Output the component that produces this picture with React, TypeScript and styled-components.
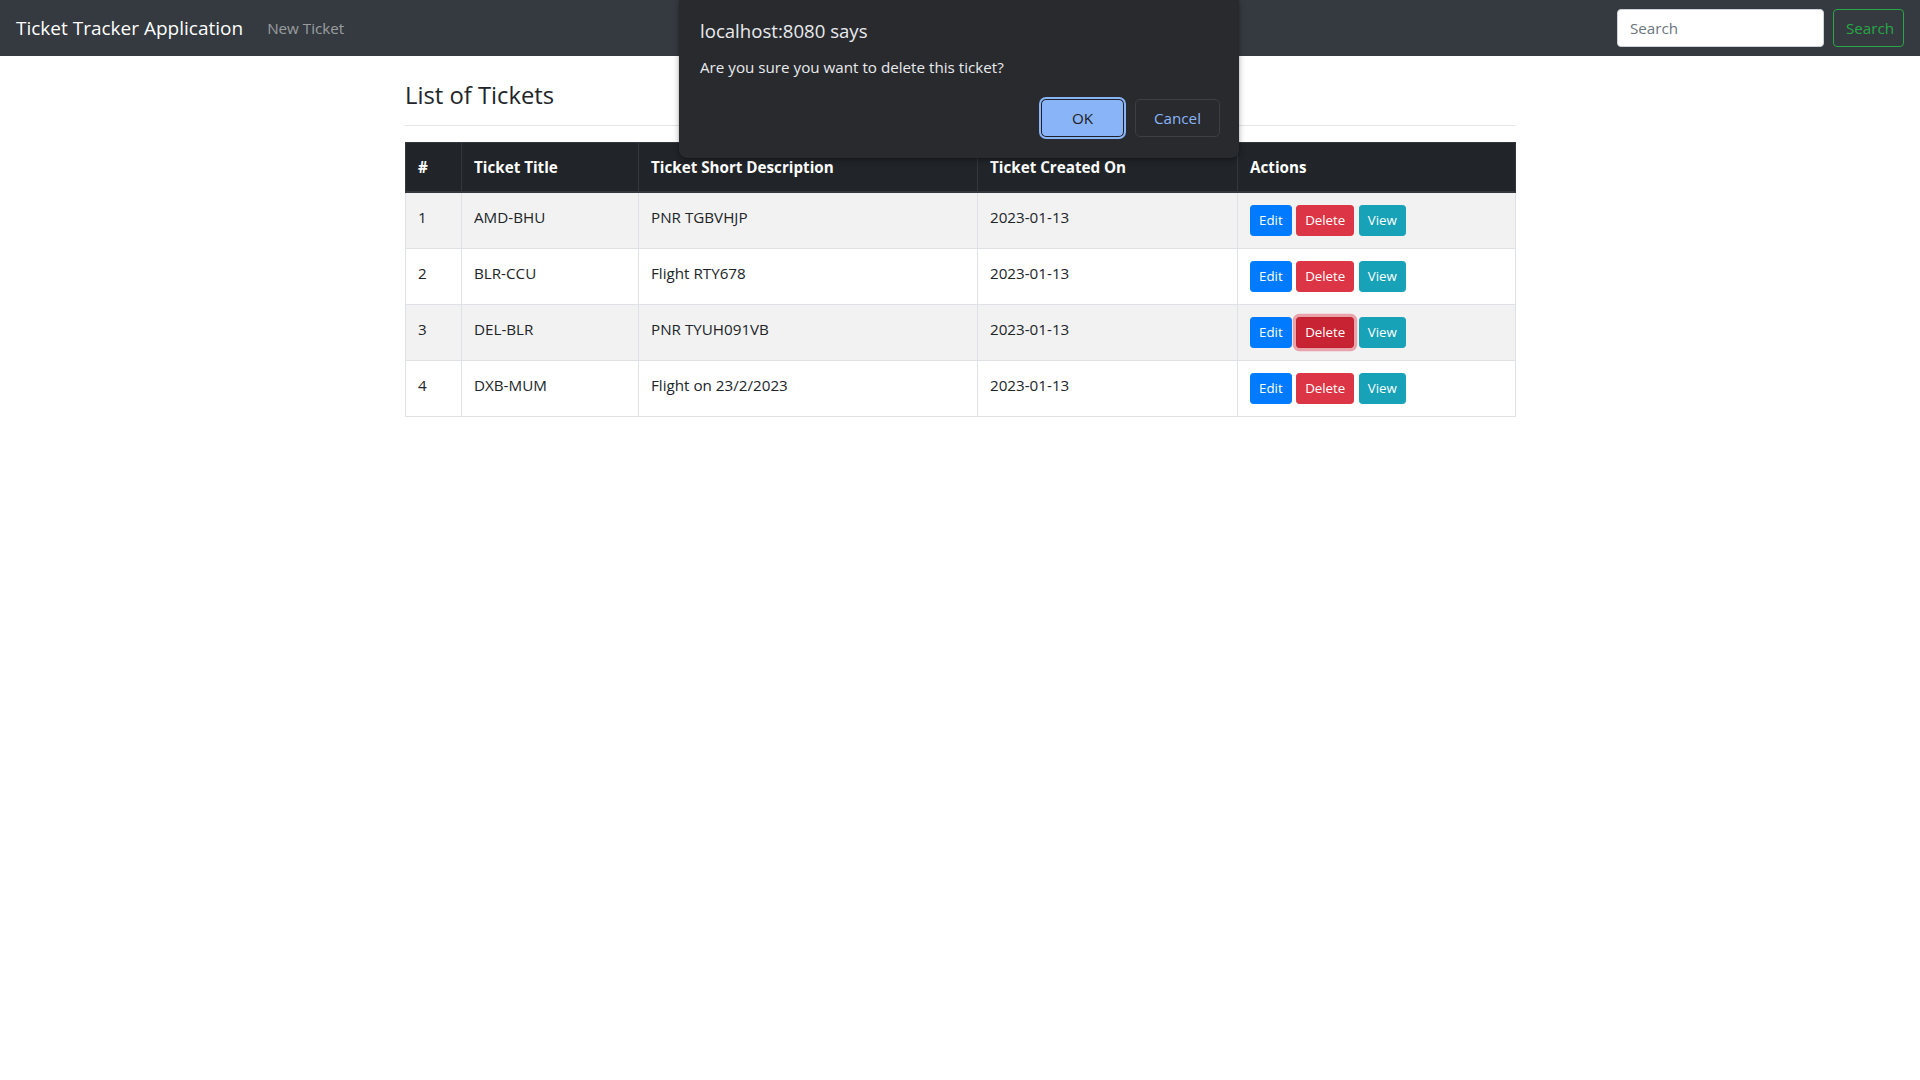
import React from "react";
import styled, { createGlobalStyle, css } from "styled-components";

const GlobalStyle = createGlobalStyle`
  html, body {
    margin: 0;
    padding: 0;
    background: #ffffff;
    font-family: "Open Sans", "Noto Sans", Arial, sans-serif;
    font-size: 15.2px;
    line-height: 1.5;
    color: #212529;
  }
  * { box-sizing: border-box; }
`;

const Page = styled.div`
  position: relative;
  min-height: 1080px;
  width: 100%;
`;

const Navbar = styled.nav`
  display: flex;
  align-items: center;
  height: 56px;
  padding: 8px 16px;
  background: #343a40;
`;

const Brand = styled.a`
  font-size: 19px;
  line-height: 30px;
  padding: 5px 0;
  margin-right: 16px;
  color: #ffffff;
  text-decoration: none;
  white-space: nowrap;
`;

const NavLink = styled.a`
  padding: 8px;
  color: rgba(255, 255, 255, 0.5);
  text-decoration: none;
  font-size: 15.2px;
  line-height: 24px;
`;

const SearchForm = styled.form`
  margin-left: auto;
  display: flex;
  align-items: center;
  gap: 9px;
`;

const SearchInput = styled.input`
  width: 207px;
  height: 38px;
  padding: 6px 12px;
  font-family: inherit;
  font-size: 15.2px;
  color: #495057;
  background: #ffffff;
  border: 1px solid #ced4da;
  border-radius: 4px;
  outline: none;
  &::placeholder { color: #6c757d; }
`;

const OutlineButton = styled.button`
  height: 38px;
  width: 71px;
  padding: 6px 12px;
  font-family: inherit;
  font-size: 15.2px;
  color: #28a745;
  background: transparent;
  border: 1px solid #28a745;
  border-radius: 4px;
`;

const Container = styled.main`
  width: 1140px;
  margin: 0 auto;
  padding: 0 15px;
`;

const Heading = styled.h3`
  margin: 24.5px 0 0;
  font-size: 23.8px;
  font-weight: 500;
  line-height: 29px;
  color: #212529;
`;

const Rule = styled.hr`
  margin: 15.5px 0 16px;
  border: 0;
  border-top: 1px solid rgba(0, 0, 0, 0.1);
`;

const Table = styled.table`
  width: 100%;
  table-layout: fixed;
  border-collapse: collapse;
  border: 1px solid #dee2e6;
`;

const HeadCell = styled.th<{ $w: number }>`
  width: ${(p) => p.$w}px;
  padding: 12px;
  text-align: left;
  vertical-align: bottom;
  font-weight: 700;
  color: #ffffff;
  background: #212529;
  border: 1px solid #32383e;
  border-bottom-width: 2px;
  line-height: 24px;
`;

const Row = styled.tr<{ $striped: boolean }>`
  background: ${(p) => (p.$striped ? "#f2f2f2" : "#ffffff")};
`;

const Cell = styled.td`
  padding: 12px;
  vertical-align: top;
  border: 1px solid #dee2e6;
  line-height: 24px;
  white-space: nowrap;
`;

const Actions = styled.div`
  display: flex;
  gap: 4.5px;
`;

const variants = {
  edit: css`background: #007bff; border-color: #007bff;`,
  delete: css`background: #dc3545; border-color: #dc3545;`,
  view: css`background: #17a2b8; border-color: #17a2b8;`,
};

const SmallButton = styled.button<{ $variant: "edit" | "delete" | "view"; $focused?: boolean }>`
  height: 31px;
  padding: 3px 8px;
  font-family: inherit;
  font-size: 13.3px;
  line-height: 21px;
  color: #ffffff;
  border: 1px solid transparent;
  border-radius: 3.2px;
  ${(p) => variants[p.$variant]}
  ${(p) =>
    p.$focused &&
    css`
      background: #c82333;
      border-color: #bd2130;
      box-shadow: 0 0 0 3.2px rgba(225, 83, 97, 0.5);
    `}
`;

const Dialog = styled.div`
  position: absolute;
  top: 0;
  left: 679px;
  width: 560px;
  height: 158px;
  padding: 14px 19px 0 21px;
  background: #292a2d;
  border-radius: 0 0 8px 8px;
  box-shadow: 0 2px 6px rgba(0, 0, 0, 0.3), 0 1px 2px rgba(0, 0, 0, 0.2);
  color: #e8eaed;
  display: flex;
  flex-direction: column;
`;

const DialogTitle = styled.div`
  font-size: 18.6px;
  line-height: 34px;
`;

const DialogMessage = styled.div`
  font-size: 15.2px;
  line-height: 24px;
  margin-top: 7px;
`;

const DialogButtons = styled.div`
  display: flex;
  justify-content: flex-end;
  gap: 11px;
  margin-top: 20px;
`;

const DialogButton = styled.button<{ $primary?: boolean }>`
  height: 38px;
  padding: 0;
  font-family: inherit;
  font-size: 15.2px;
  border-radius: 5px;
  ${(p) =>
    p.$primary
      ? css`
          width: 83px;
          background: #8ab4f8;
          color: #202124;
          border: 1.5px solid #202124;
          outline: 2px solid #8ab4f8;
          outline-offset: 0;
        `
      : css`
          width: 85px;
          background: transparent;
          color: #8ab4f8;
          border: 1px solid #3c4043;
        `}
`;

type Ticket = { id: number; title: string; desc: string; created: string };

const tickets: Ticket[] = [
  { id: 1, title: "AMD-BHU", desc: "PNR TGBVHJP", created: "2023-01-13" },
  { id: 2, title: "BLR-CCU", desc: "Flight RTY678", created: "2023-01-13" },
  { id: 3, title: "DEL-BLR", desc: "PNR TYUH091VB", created: "2023-01-13" },
  { id: 4, title: "DXB-MUM", desc: "Flight on 23/2/2023", created: "2023-01-13" },
];

const columns = [
  { label: "#", w: 56 },
  { label: "Ticket Title", w: 177 },
  { label: "Ticket Short Description", w: 339 },
  { label: "Ticket Created On", w: 260 },
  { label: "Actions", w: 278 },
];

export default function App() {
  return (
    <Page>
      <GlobalStyle />
      <Navbar>
        <Brand href="#">Ticket Tracker Application</Brand>
        <NavLink href="#">New Ticket</NavLink>
        <SearchForm onSubmit={(e) => e.preventDefault()}>
          <SearchInput type="search" placeholder="Search" />
          <OutlineButton type="submit">Search</OutlineButton>
        </SearchForm>
      </Navbar>
      <Container>
        <Heading>List of Tickets</Heading>
        <Rule />
        <Table>
          <thead>
            <tr>
              {columns.map((c) => (
                <HeadCell key={c.label} $w={c.w}>
                  {c.label}
                </HeadCell>
              ))}
            </tr>
          </thead>
          <tbody>
            {tickets.map((t, i) => (
              <Row key={t.id} $striped={i % 2 === 0}>
                <Cell>{t.id}</Cell>
                <Cell>{t.title}</Cell>
                <Cell>{t.desc}</Cell>
                <Cell>{t.created}</Cell>
                <Cell>
                  <Actions>
                    <SmallButton $variant="edit">Edit</SmallButton>
                    <SmallButton $variant="delete" $focused={t.id === 3}>
                      Delete
                    </SmallButton>
                    <SmallButton $variant="view">View</SmallButton>
                  </Actions>
                </Cell>
              </Row>
            ))}
          </tbody>
        </Table>
      </Container>
      <Dialog role="alertdialog">
        <DialogTitle>localhost:8080 says</DialogTitle>
        <DialogMessage>Are you sure you want to delete this ticket?</DialogMessage>
        <DialogButtons>
          <DialogButton $primary>OK</DialogButton>
          <DialogButton>Cancel</DialogButton>
        </DialogButtons>
      </Dialog>
    </Page>
  );
}
